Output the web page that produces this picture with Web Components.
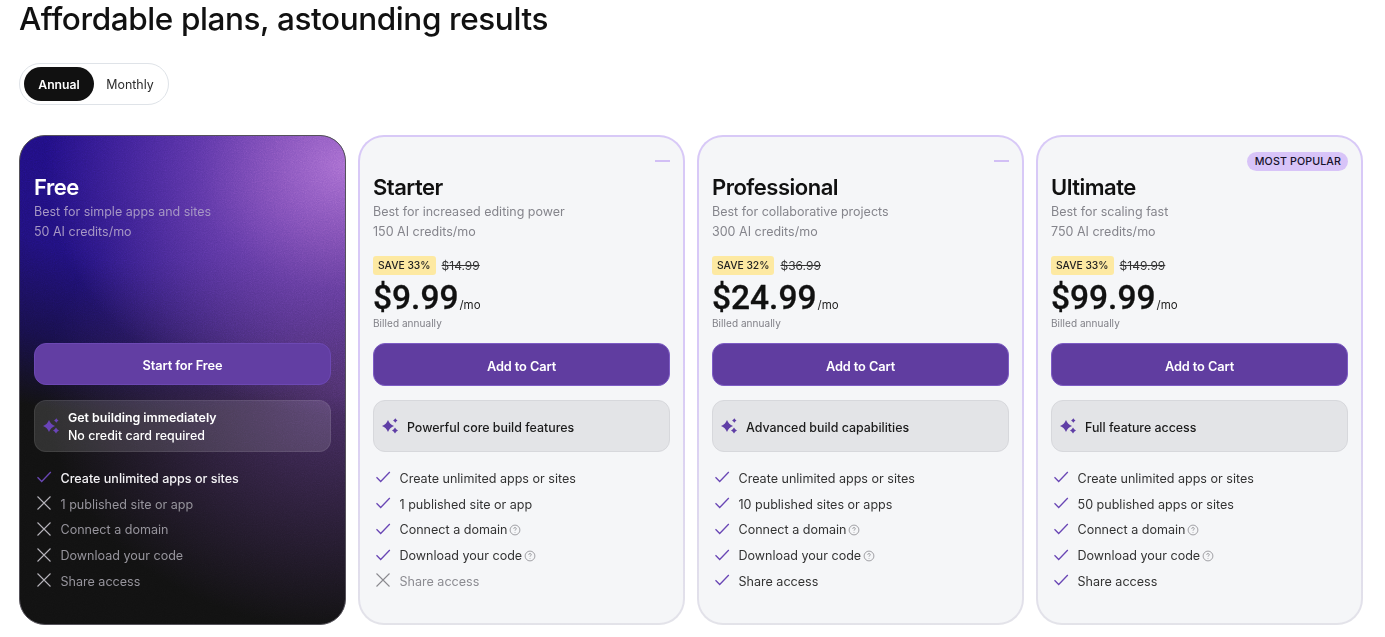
<!DOCTYPE html>
<html lang="en"><head><meta charset="utf-8"><title>Plans</title>
<style>
html,body{margin:0;padding:0;background:#fff;overflow:hidden}
body{font-family:Inter,"Liberation Sans",sans-serif;color:#111}
</style></head><body>
<plans-page>
  <span slot="title">Affordable plans, astounding results</span>
  <billing-toggle slot="toggle"></billing-toggle>
  <plan-card variant="free" name="Free" desc="Best for simple apps and sites" credits="50 AI credits/mo" cta="Start for Free" box="Get building immediately" box2="No credit card required">
    <feature-item strong>Create unlimited apps or sites</feature-item>
    <feature-item no>1 published site or app</feature-item>
    <feature-item no>Connect a domain</feature-item>
    <feature-item no>Download your code</feature-item>
    <feature-item no>Share access</feature-item>
  </plan-card>
  <plan-card tag="dash" name="Starter" desc="Best for increased editing power" credits="150 AI credits/mo" save="SAVE 33%" old="$14.99" price="$9.99" cta="Add to Cart" box="Powerful core build features">
    <feature-item>Create unlimited apps or sites</feature-item>
    <feature-item>1 published site or app</feature-item>
    <feature-item info>Connect a domain</feature-item>
    <feature-item info>Download your code</feature-item>
    <feature-item no>Share access</feature-item>
  </plan-card>
  <plan-card tag="dash" name="Professional" desc="Best for collaborative projects" credits="300 AI credits/mo" save="SAVE 32%" old="$36.99" price="$24.99" cta="Add to Cart" box="Advanced build capabilities">
    <feature-item>Create unlimited apps or sites</feature-item>
    <feature-item>10 published sites or apps</feature-item>
    <feature-item info>Connect a domain</feature-item>
    <feature-item info>Download your code</feature-item>
    <feature-item>Share access</feature-item>
  </plan-card>
  <plan-card tag="MOST POPULAR" name="Ultimate" desc="Best for scaling fast" credits="750 AI credits/mo" save="SAVE 33%" old="$149.99" price="$99.99" cta="Add to Cart" box="Full feature access">
    <feature-item>Create unlimited apps or sites</feature-item>
    <feature-item>50 published apps or sites</feature-item>
    <feature-item info>Connect a domain</feature-item>
    <feature-item info>Download your code</feature-item>
    <feature-item>Share access</feature-item>
  </plan-card>
</plans-page>
<script>
const FONT='Inter,"Liberation Sans",sans-serif';
const esc=s=>(s||'').replace(/&/g,'&amp;').replace(/</g,'&lt;').replace(/"/g,'&quot;');

class PlansPage extends HTMLElement{
  constructor(){super();this.attachShadow({mode:'open'}).innerHTML=`<style>
  :host{display:block;width:1385px;height:637px;box-sizing:border-box;padding:0 22px 0 19px;overflow:hidden}
  h1{margin:0;height:63px;box-sizing:border-box;font:550 31.5px/38px ${FONT};letter-spacing:-.4px;color:#111}
  .t{height:72px}
  .grid{display:grid;grid-template-columns:repeat(4,1fr);gap:12px}
  </style><h1><slot name="title"></slot></h1><div class="t"><slot name="toggle"></slot></div><div class="grid"><slot></slot></div>`;}
}
class BillingToggle extends HTMLElement{
  constructor(){super();this.attachShadow({mode:'open'}).innerHTML=`<style>
  :host{display:inline-flex;box-sizing:border-box;height:42px;width:150px;padding:3px 0 3px 4px;border:1px solid #dfe3e8;border-radius:21px;background:#fff;align-items:stretch;font:12.4px/1 ${FONT}}
  span{display:flex;align-items:center;justify-content:center;border-radius:18px;box-sizing:border-box;padding-top:2px}
  .on{width:70px;background:#111;color:#fff;font-weight:600;font-size:12.2px}
  .off{flex:1;color:#2b2b2b;padding-top:3px;padding-right:2px}
  </style><span class="on">Annual</span><span class="off">Monthly</span>`;}
}
const SPARK=c=>`<svg width="18" height="18" viewBox="0 0 18 18" fill="${c}"><path d="M7 3Q8.700 7.300 13 9 8.700 10.700 7 15 5.300 10.700 1 9 5.300 7.300 7 3z"/><path d="M14.300 1.300Q15 2.800 16.500 3.500 15 4.200 14.300 5.700 13.600 4.200 12.100 3.500 13.600 2.800 14.300 1.300z"/><path d="M14 10.500Q14.900 12.600 17 13.500 14.900 14.400 14 16.500 13.100 14.400 11 13.500 13.100 12.600 14 10.500z"/></svg>`;
class PlanCard extends HTMLElement{
  constructor(){super();this.attachShadow({mode:'open'});}
  connectedCallback(){
    const a=n=>esc(this.getAttribute(n));
    const free=this.getAttribute('variant')==='free';
    const tag=this.getAttribute('tag');
    this.shadowRoot.innerHTML=`<style>
    :host{display:block;position:relative;box-sizing:border-box;height:490px;padding:36px 13px 0;border:2px solid transparent;border-radius:26px;background:linear-gradient(#f5f6f8,#f5f6f8) padding-box,linear-gradient(#d8c9f7 0,#d8c9f7 45%,#e3e3e9 100%) border-box;overflow:hidden;color:#111;font-family:${FONT}}
    :host([variant=free]){border:1px solid #55525a;padding:37px 14px 0;background:
      radial-gradient(ellipse 300px 250px at 100% 6%,rgba(168,108,208,.98),rgba(128,78,188,.6) 50%,rgba(90,50,160,0) 100%),
      radial-gradient(ellipse 300px 240px at 100% 52%,rgba(105,62,150,.62),rgba(70,30,110,0) 100%),
      radial-gradient(ellipse 420px 310px at 38% -6%,#200c86 0%,#20107a 50%,#170f48 78%,rgba(17,17,17,0) 100%),#111;color:#fff}
    .grain{position:absolute;inset:0;width:100%;height:100%;opacity:.34;mix-blend-mode:overlay;pointer-events:none}
    .wrap{position:relative;display:flex;flex-direction:column;height:100%}
    .tag{position:absolute;top:15px;right:13px;height:19px;padding:0 7px 0 8px;border-radius:10px;background:#d8c4f8;font:500 10.7px/19px ${FONT};letter-spacing:.1px;color:#16122a}
    .dash{position:absolute;top:23px;right:13px;width:15px;height:1.500px;background:#d2bff5}
    h2{margin:0;height:29px;font:600 22px/28px ${FONT};letter-spacing:-.5px}
    :host([variant=free]) h2{font-weight:600;color:#fff}
    .d{font:12.5px/20px ${FONT};color:#85858c;height:20px;white-space:nowrap}
    :host([variant=free]) .d{color:#a697c4}
    .pricing{height:101px;box-sizing:border-box;padding-top:14px}
    .s{display:flex;align-items:center;gap:6px;height:19px}
    .save{height:19px;padding:0 5px;border-radius:3px;background:#fde9a2;font:500 10.3px/19px ${FONT};color:#222}
    .old{font:12px/21px ${FONT};color:#333;text-decoration:line-through}
    .p{display:flex;align-items:baseline;gap:1px;height:38px;margin-top:4px}
    .amt{font:500 33.5px/38px Roboto,${FONT};color:#111;-webkit-text-stroke:.3px #111}
    .mo{font:11.5px/14px ${FONT};color:#222}
    .b{font:10px/12px ${FONT};color:#808087;letter-spacing:.05px;margin-top:0}
    .btn{flex:none;height:43px;padding-top:5px;display:flex;align-items:center;justify-content:center;box-sizing:border-box;border:1px solid #7d5cc4;border-radius:12px;background:#603da0;color:#fff;font:600 12.8px/1 ${FONT};letter-spacing:-.1px}
    :host([variant=free]) .btn{background:#623ea3;border-color:#6d48b4;height:42px;margin-bottom:1px}
    .box{flex:none;height:52px;margin-top:14px;box-sizing:border-box;border:1px solid #d7d8dc;border-radius:12px;background:#e3e4e7;display:flex;align-items:center;gap:8px;padding:0 7px;font:500 12.4px/18px ${FONT};color:#1a1a1a}
    :host([variant=free]) .box{background:rgba(255,255,255,.13);border-color:rgba(255,255,255,.08);color:#fff;padding-left:7px}
    .box svg{flex:none}
    .box div{padding-top:3px}
    :host([variant=free]) .box div{padding-top:2px}
    .box b{font-weight:600}
    ul{list-style:none;margin:0;padding:14px 0 0;display:block}
    </style>
    ${free?`<svg class="grain" aria-hidden="true"><filter id="n"><feTurbulence type="fractalNoise" baseFrequency=".9" numOctaves="2" stitchTiles="stitch"/><feColorMatrix type="saturate" values="0"/></filter><rect width="100%" height="100%" filter="url(#n)"/></svg>`:''}
    <div class="wrap">
    <h2>${a('name')}</h2>
    <div class="d">${a('desc')}</div><div class="d">${a('credits')}</div>
    <div class="pricing">${free?'':`<div class="s"><span class="save">${a('save')}</span><span class="old">${a('old')}</span></div>
      <div class="p"><span class="amt">${a('price')}</span><span class="mo">/mo</span></div><div class="b">Billed annually</div>`}</div>
    <div class="btn">${a('cta')}</div>
    <div class="box">${SPARK(free?'#6a44b8':'#5f3ea6')}<div>${free?'<b>'+a('box')+'</b><br>'+a('box2'):a('box')}</div></div>
    <ul><slot></slot></ul>
    </div>${tag==='dash'?'<span class="dash"></span>':''}${tag&&tag!=='dash'?`<span class="tag">${esc(tag)}</span>`:''}`;
    this.querySelectorAll('feature-item').forEach(f=>{if(free)f.setAttribute('dark','')});
  }
}
class FeatureItem extends HTMLElement{
  constructor(){super();this.attachShadow({mode:'open'});}
  connectedCallback(){
    const no=this.hasAttribute('no'),info=this.hasAttribute('info');
    this.shadowRoot.innerHTML=`<style>
    :host{display:flex;align-items:center;height:25.750px;font:12.55px/20px ${FONT};color:#333;white-space:nowrap;--x:#8a8a8f}
    :host([no]){color:#8c8c92}
    :host([dark]){color:#96949c;--x:#b5b3ba}
    :host([dark][strong]){color:#f3f2f5;font-weight:500}
    svg.i{flex:none;width:16px;height:16px;margin:-3px 8.500px 0 2px}
    svg.q{flex:none;width:12px;height:12px;margin-left:2px}
    </style>
    ${no?`<svg class="i" viewBox="0 0 16 16" fill="none" stroke="var(--x)" stroke-width="1.100"><path d="M1.500 1.500l13 13M14.500 1.500l-13 13"/></svg>`
       :`<svg class="i" viewBox="0 0 16 16" fill="none" stroke="#6a47b5" stroke-width="1.300"><path d="M1.500 8.300l4.200 4.200L14.800 3"/></svg>`}
    <span><slot></slot></span>
    ${info?`<svg class="q" viewBox="0 0 12 12" fill="none" stroke="#8b8b90" stroke-width=".8"><circle cx="6" cy="6" r="4.900"/><path d="M4.700 4.800c0-.8.6-1.300 1.300-1.300s1.300.5 1.300 1.200c0 1-1.300 1-1.300 2"/><path d="M6 8v.7"/></svg>`:''}`;
  }
}
customElements.define('plans-page',PlansPage);
customElements.define('billing-toggle',BillingToggle);
customElements.define('plan-card',PlanCard);
customElements.define('feature-item',FeatureItem);
</script>
</body></html>
